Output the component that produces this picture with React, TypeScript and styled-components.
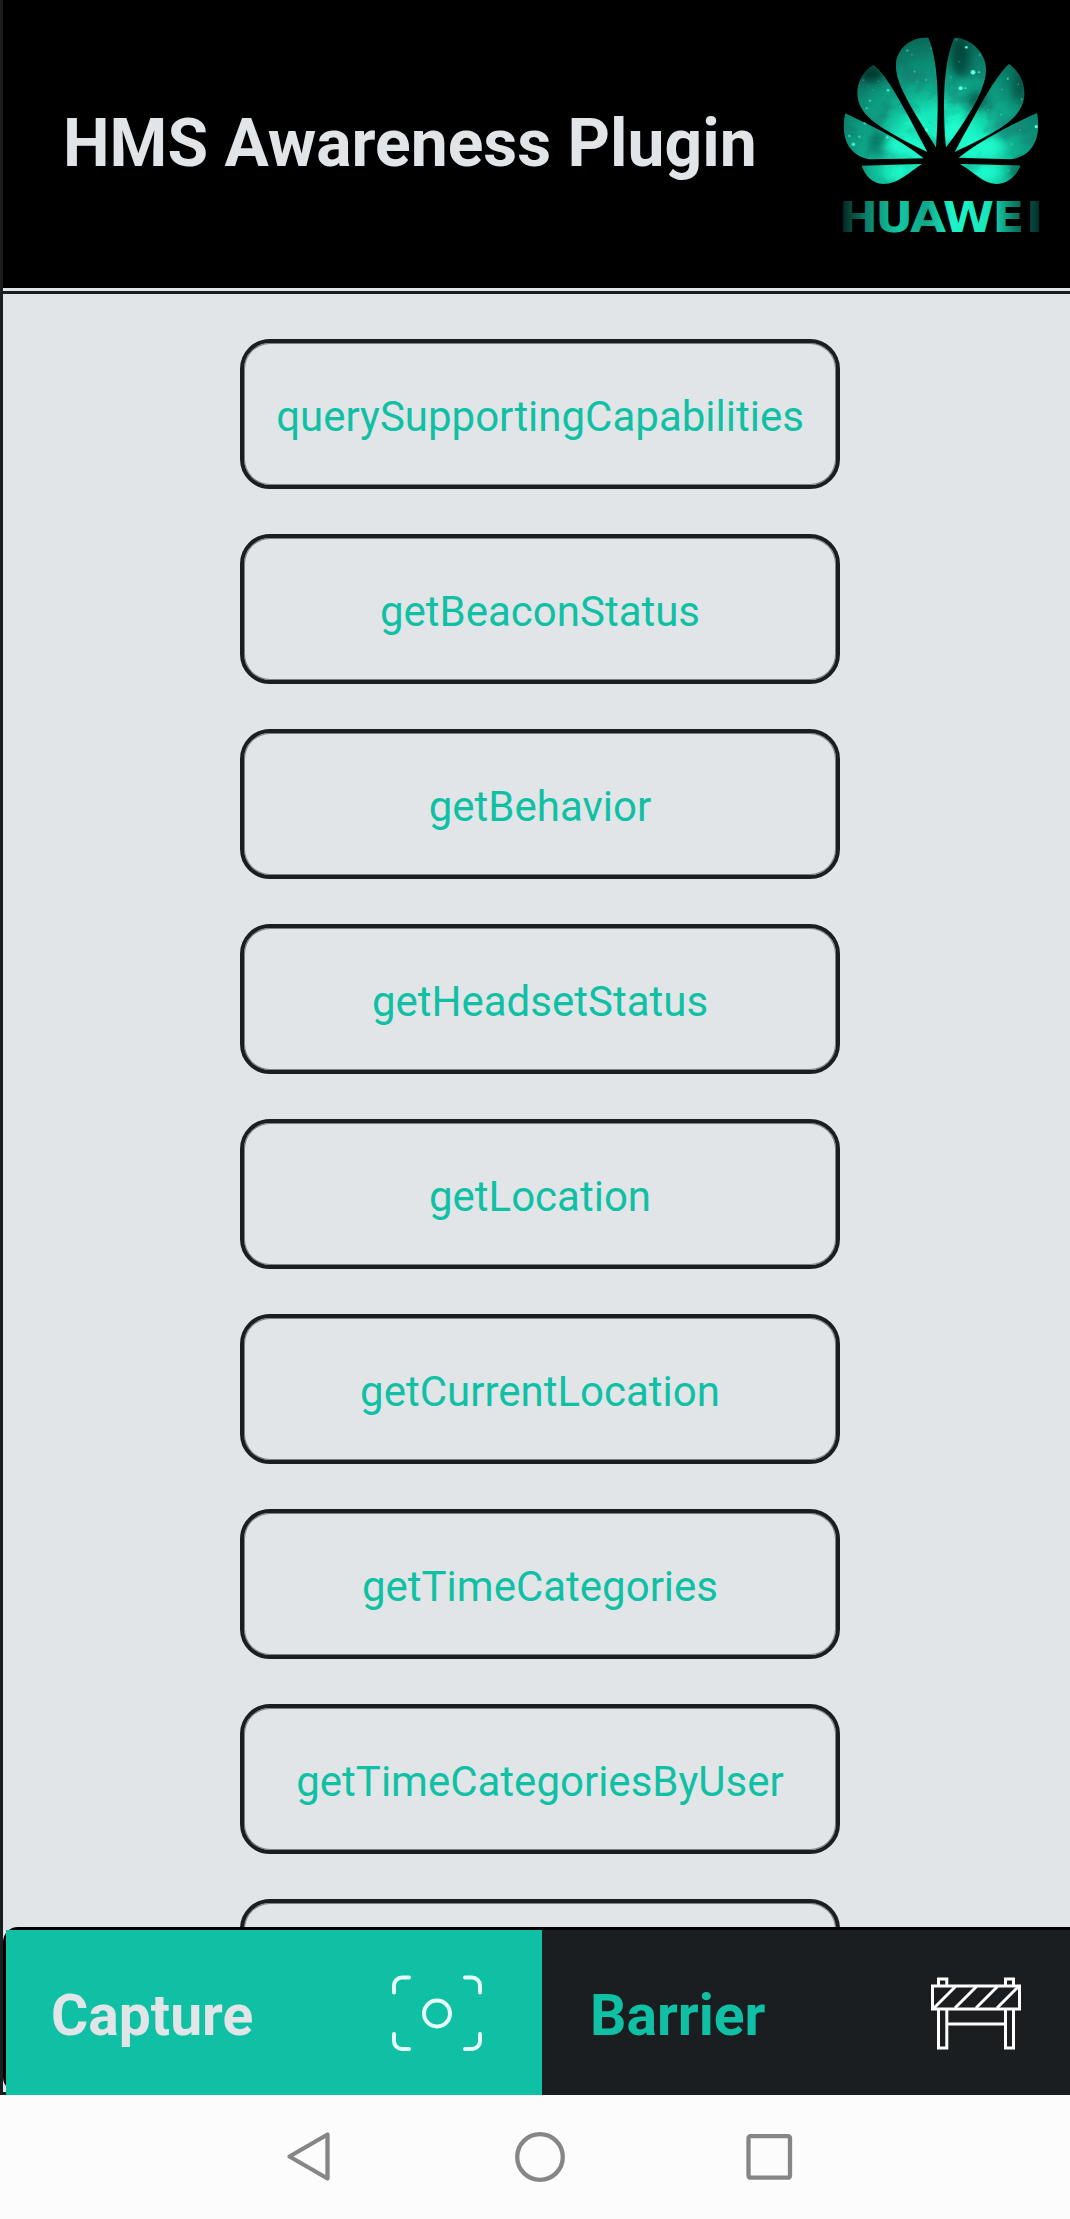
import React from "react";
import styled, { createGlobalStyle } from "styled-components";

const INK = "#1a1e21";
const PAPER = "#e1e5e8";
const TEAL = "#10c0a4";

const GlobalStyle = createGlobalStyle`
  body {
    margin: 0;
    background: #fcfcfc;
    font-family: Roboto, "Liberation Sans", sans-serif;
  }
`;

const Screen = styled.div`
  width: 1070px;
  height: 2219px;
  display: flex;
  flex-direction: column;
  overflow: hidden;
`;

const AppFrame = styled.div`
  box-sizing: border-box;
  height: 2095px;
  display: flex;
  flex-direction: column;
  border-left: 3px solid ${INK};
  border-bottom: 3px solid ${INK};
  background: ${PAPER};
`;

const Header = styled.header`
  flex: none;
  height: 288px;
  display: flex;
  justify-content: space-between;
  background: #000;
`;

const Title = styled.h1`
  margin: 0;
  padding: 105px 0 0 60px;
  font-size: 66px;
  line-height: 78px;
  font-weight: 700;
  white-space: nowrap;
  color: ${PAPER};
`;

const LogoSvg = styled.svg`
  flex: none;
  width: 250px;
  height: 230px;
  margin-top: 20px;
`;

const Content = styled.main`
  flex: 1;
  min-height: 0;
  box-sizing: border-box;
  margin-top: 3px;
  border-top: 3px solid ${INK};
  padding: 45px 0 0 237px;
  display: flex;
  flex-direction: column;
  gap: 45px;
  overflow: hidden;
`;

const ActionButton = styled.button`
  flex: none;
  box-sizing: border-box;
  width: 600px;
  height: 150px;
  padding: 5px 0 0;
  border: 4px solid ${INK};
  border-radius: 30px;
  box-shadow: inset 0 0 0 1px rgba(26, 30, 33, 0.5);
  background: transparent;
  font-family: inherit;
  font-size: 42px;
  line-height: 50px;
  color: ${TEAL};
`;

const TabBar = styled.nav`
  flex: none;
  box-sizing: border-box;
  height: 165px;
  border: 3px solid #000;
  border-right: 0;
  border-radius: 15px 0 0 15px;
  display: flex;
`;

const Tab = styled.div<{ $active?: boolean }>`
  flex: none;
  box-sizing: border-box;
  width: ${(p) => (p.$active ? 536 : 528)}px;
  height: 165px;
  padding: ${(p) => (p.$active ? "0 60px 0 45px" : "0 49px 0 48px")};
  display: flex;
  align-items: center;
  justify-content: space-between;
  background: ${(p) => (p.$active ? TEAL : INK)};
  color: ${(p) => (p.$active ? PAPER : TEAL)};
`;

const TabLabel = styled.span`
  padding-top: 5px;
  font-size: 57px;
  line-height: 67px;
  font-weight: 700;
`;

const TabIcon = styled.svg`
  flex: none;
  width: 90px;
  height: 76px;
`;

const SystemBar = styled.footer`
  flex: none;
  height: 124px;
  padding-left: 285px;
  display: flex;
  align-items: flex-start;
  background: #fcfcfc;
`;

const NavIcon = styled.svg<{ $gap?: number }>`
  flex: none;
  width: 52px;
  height: 52px;
  margin-top: 36px;
  margin-left: ${(p) => p.$gap ?? 0}px;
  fill: none;
  stroke: #868686;
  stroke-width: 4.3;
  stroke-linejoin: round;
`;

const ACTIONS = [
  "querySupportingCapabilities",
  "getBeaconStatus",
  "getBehavior",
  "getHeadsetStatus",
  "getLocation",
  "getCurrentLocation",
  "getTimeCategories",
  "getTimeCategoriesByUser",
  "",
];

const PETALS = [
  "M348 382C354 290 362 140 325 53C268 50 225 92 228 142C230 192 262 245 348 382Z",
  "M378 382C370 290 364 140 403 53C455 55 502 100 498 155C494 210 450 285 378 382Z",
  "M322 396C240 240 200 165 160 136C128 155 108 192 113 230C120 290 180 325 322 396Z",
  "M404 396C485 250 525 170 567 132C600 155 617 195 612 235C602 300 530 335 404 396Z",
  "M311 415C225 350 150 315 76 280C62 335 75 405 148 418Z",
  "M416 413C500 350 580 312 651 279C663 335 650 408 572 418Z",
  "M125 437L306 432C268 455 235 492 190 492C155 490 135 465 125 437Z",
  "M420 432L601 437C590 465 565 492 528 492C488 490 462 455 420 432Z",
];

const STARS: [number, number, number, number][] = [
  [459, 157, 7, 1], [422, 205, 6, 1], [439, 82, 4, 1], [477, 157, 3, 0.9], [436, 205, 3, 0.8],
  [100, 373, 5, 1], [88, 348, 3, 0.9], [135, 309, 4, 0.9], [118, 350, 3, 0.8], [649, 320, 5, 1],
  [319, 330, 5, 0.9], [304, 326, 4, 0.8], [202, 352, 4, 0.8], [204, 211, 4, 0.8], [150, 242, 3, 0.8],
  [140, 265, 3, 0.7], [262, 92, 3, 0.7], [283, 155, 2.5, 0.8], [333, 85, 2.5, 0.7], [276, 104, 2, 0.7],
  [318, 180, 2.5, 0.7], [291, 186, 2, 0.6], [563, 176, 3, 0.8], [594, 193, 2, 0.7], [546, 208, 2, 0.7],
  [418, 125, 2, 0.7], [410, 60, 2, 0.7], [479, 105, 2.5, 0.6], [392, 172, 2, 0.6], [543, 284, 2.5, 0.7],
  [605, 238, 2.5, 0.7], [175, 183, 2, 0.6], [130, 180, 2, 0.6], [160, 210, 2, 0.6], [505, 270, 2, 0.6],
  [565, 452, 2.5, 0.6], [575, 372, 2.5, 0.6], [600, 330, 2, 0.6], [240, 260, 2, 0.6], [260, 310, 2.5, 0.6],
];

function HuaweiLogo() {
  return (
    <LogoSvg viewBox="0 0 750 690" role="img">
      <defs>
        <radialGradient id="glow" gradientUnits="userSpaceOnUse" cx="365" cy="425" r="390">
          <stop offset="0" stopColor="#1effcf" />
          <stop offset="0.38" stopColor="#16e8ba" />
          <stop offset="0.56" stopColor="#0fb090" />
          <stop offset="0.78" stopColor="#0b8a72" />
          <stop offset="1" stopColor="#076352" />
        </radialGradient>
        <linearGradient id="word" gradientUnits="userSpaceOnUse" x1="63" y1="0" x2="592" y2="0">
          <stop offset="0" stopColor="#052b25" />
          <stop offset="0.12" stopColor="#0c7f6a" />
          <stop offset="0.28" stopColor="#12c9a4" />
          <stop offset="0.42" stopColor="#0fa688" />
          <stop offset="0.56" stopColor="#1cf5c8" />
          <stop offset="0.74" stopColor="#18e6ba" />
          <stop offset="0.88" stopColor="#0a7a66" />
          <stop offset="1" stopColor="#042f29" />
        </linearGradient>
        <clipPath id="petals">
          {PETALS.map((d) => (
            <path key={d} d={d} />
          ))}
        </clipPath>
        <filter id="clouds" x="0" y="0" width="100%" height="100%">
          <feTurbulence type="fractalNoise" baseFrequency="0.014" numOctaves={5} seed={8} />
          <feColorMatrix values="0 0 0 0 0.01  0 0 0 0 0.16  0 0 0 0 0.14  3.6 0 0 0 -1.65" />
        </filter>
        <filter id="soft" x="-50%" y="-50%" width="200%" height="200%">
          <feGaussianBlur stdDeviation="14" />
        </filter>
      </defs>
      <g clipPath="url(#petals)">
        <rect width="750" height="690" fill="url(#glow)" />
        <rect width="750" height="510" filter="url(#clouds)" opacity="0.45" />
        <g filter="url(#soft)">
          <ellipse cx="155" cy="160" rx="38" ry="26" fill="#022a22" opacity="0.85" />
          <ellipse cx="420" cy="110" rx="30" ry="62" fill="#03362c" opacity="0.75" />
          <ellipse cx="470" cy="240" rx="30" ry="26" fill="#022a22" opacity="0.6" />
          <ellipse cx="600" cy="200" rx="24" ry="50" fill="#03362c" opacity="0.5" />
          <ellipse cx="180" cy="370" rx="26" ry="34" fill="#03362c" opacity="0.6" />
          <ellipse cx="590" cy="455" rx="24" ry="20" fill="#03362c" opacity="0.6" />
          <ellipse cx="250" cy="380" rx="60" ry="30" fill="#20ffd0" opacity="0.85" />
          <ellipse cx="285" cy="300" rx="26" ry="36" fill="#20ffd0" opacity="0.45" />
          <ellipse cx="410" cy="335" rx="46" ry="38" fill="#20ffd0" opacity="0.8" />
          <ellipse cx="490" cy="380" rx="62" ry="28" fill="#20ffd0" opacity="0.8" />
          <ellipse cx="245" cy="455" rx="50" ry="20" fill="#20ffd0" opacity="0.8" />
          <ellipse cx="495" cy="455" rx="50" ry="20" fill="#20ffd0" opacity="0.8" />
        </g>
        {STARS.map(([x, y, r, o]) => (
          <circle key={`${x}-${y}`} cx={x} cy={y} r={r} fill="#5dffe0" opacity={o} />
        ))}
      </g>
      <text
        transform="translate(0 635) scale(1.11 1)"
        x="51.4 149.5 243 332 466 557"
        y="0"
        fontFamily="'DejaVu Sans', sans-serif"
        fontSize="126"
        fontWeight="700"
        fill="url(#word)"
      >
        HUAWEI
      </text>
    </LogoSvg>
  );
}

function CaptureIcon() {
  return (
    <TabIcon viewBox="0 0 90 76" fill="none" stroke="#e6fffb" strokeWidth="4" strokeLinecap="round">
      <path d="M2 17.500V10.500a8 8 0 0 1 8-8h7M73 2.500h7a8 8 0 0 1 8 8v7M88 59v7a8 8 0 0 1-8 8h-7M17 74h-7a8 8 0 0 1-8-8v-7" />
      <circle cx="45" cy="38.500" r="13" />
    </TabIcon>
  );
}

function BarrierIcon() {
  return (
    <TabIcon viewBox="0 0 90 76" fill="none" stroke="#fff" strokeWidth="3">
      <path d="M1.5 11h87v23h-87z" />
      <path d="M7.5 11V4h8.3v7M74.5 11V4h8v7" />
      <path d="M7.5 34v39h8.3V34M74.5 34v39h8V34M16 49h58" />
      <path d="M3 33L24.5 11.5M24 33L45.5 11.5M45 33L66.5 11.5M66 33L87.5 11.5" />
    </TabIcon>
  );
}

export default function App() {
  return (
    <>
      <GlobalStyle />
      <Screen>
        <AppFrame>
          <Header>
            <Title>HMS Awareness Plugin</Title>
            <HuaweiLogo />
          </Header>
          <Content>
            {ACTIONS.map((name, i) => (
              <ActionButton key={i}>{name}</ActionButton>
            ))}
          </Content>
          <TabBar>
            <Tab $active>
              <TabLabel>Capture</TabLabel>
              <CaptureIcon />
            </Tab>
            <Tab>
              <TabLabel>Barrier</TabLabel>
              <BarrierIcon />
            </Tab>
          </TabBar>
        </AppFrame>
        <SystemBar>
          <NavIcon viewBox="0 0 52 52">
            <path d="M4.5 25.5L42.5 3.5V47.5Z" />
          </NavIcon>
          <NavIcon viewBox="0 0 52 52" $gap={177}>
            <circle cx="26" cy="26" r="22.8" />
          </NavIcon>
          <NavIcon viewBox="0 0 52 52" $gap={177}>
            <rect x="5.5" y="5.2" width="41.5" height="41.5" rx="2" />
          </NavIcon>
        </SystemBar>
      </Screen>
    </>
  );
}
